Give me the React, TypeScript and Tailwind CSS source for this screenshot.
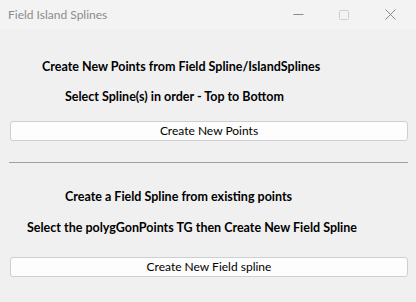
import React from 'react';

const font = { fontFamily: 'Lato, "Noto Sans", sans-serif' };

const TitleBar: React.FC = () => (
  <div className="flex h-[29px] items-center bg-[#f3f3f3] pl-2">
    <span className="text-[12px] text-[#8c8c8c]">Field Island Splines</span>
    <div className="ml-auto flex h-full items-center pr-[3px]">
      {/* minimize */}
      <div className="flex h-full w-[46px] items-center justify-center">
        <svg width="11" height="11" viewBox="0 0 11 11">
          <path d="M0.5 5.5h10" stroke="#8a8a8a" strokeWidth="1" />
        </svg>
      </div>
      {/* maximize (disabled) */}
      <div className="flex h-full w-[46px] items-center justify-center">
        <svg width="10" height="10" viewBox="0 0 10 10">
          <rect x="0.5" y="0.5" width="9" height="9" rx="1" fill="none" stroke="#d0d0d0" />
        </svg>
      </div>
      {/* close */}
      <div className="flex h-full w-[46px] items-center justify-center">
        <svg width="11" height="11" viewBox="0 0 11 11">
          <path d="M0.5 0.5l10 10M10.5 0.5l-10 10" stroke="#8a8a8a" strokeWidth="1" />
        </svg>
      </div>
    </div>
  </div>
);

const WideButton: React.FC<{ label: string }> = ({ label }) => (
  <button className="ml-[10px] mr-[8px] h-[20px] rounded-[3px] border border-[#cfcfcf] bg-[#fdfdfd] text-[12px] leading-[18px] text-black">
    {label}
  </button>
);

const App: React.FC = () => {
  return (
    <div className="flex h-[302px] w-[416px] flex-col bg-[#f0f0f0]" style={font}>
      <TitleBar />

      {/* Points from spline section */}
      <div className="flex flex-col">
        <p className="mt-[30px] pl-[42px] text-[12.5px] font-bold leading-[16px] text-black">
          Create New Points from Field Spline/IslandSplines
        </p>
        <p className="mt-[14px] pl-[65px] text-[12.5px] font-bold leading-[16px] text-black">
          Select Spline(s) in order - Top to Bottom
        </p>
        <div className="mt-[16px] flex flex-col">
          <WideButton label="Create New Points" />
        </div>
      </div>

      <div className="ml-[9px] mt-[21px] h-px w-[399px] bg-[#a0a0a0]" />

      {/* Spline from points section */}
      <div className="flex flex-col">
        <p className="mt-[26px] pl-[65px] text-[12.5px] font-bold leading-[16px] text-black">
          Create a Field Spline from existing points
        </p>
        <p className="mt-[15px] pl-[27px] text-[12.5px] font-bold leading-[16px] text-black">
          Select the polygGonPoints TG then Create New Field Spline
        </p>
        <div className="mt-[21px] flex flex-col">
          <WideButton label="Create New Field spline" />
        </div>
      </div>
    </div>
  );
};

export default App;
